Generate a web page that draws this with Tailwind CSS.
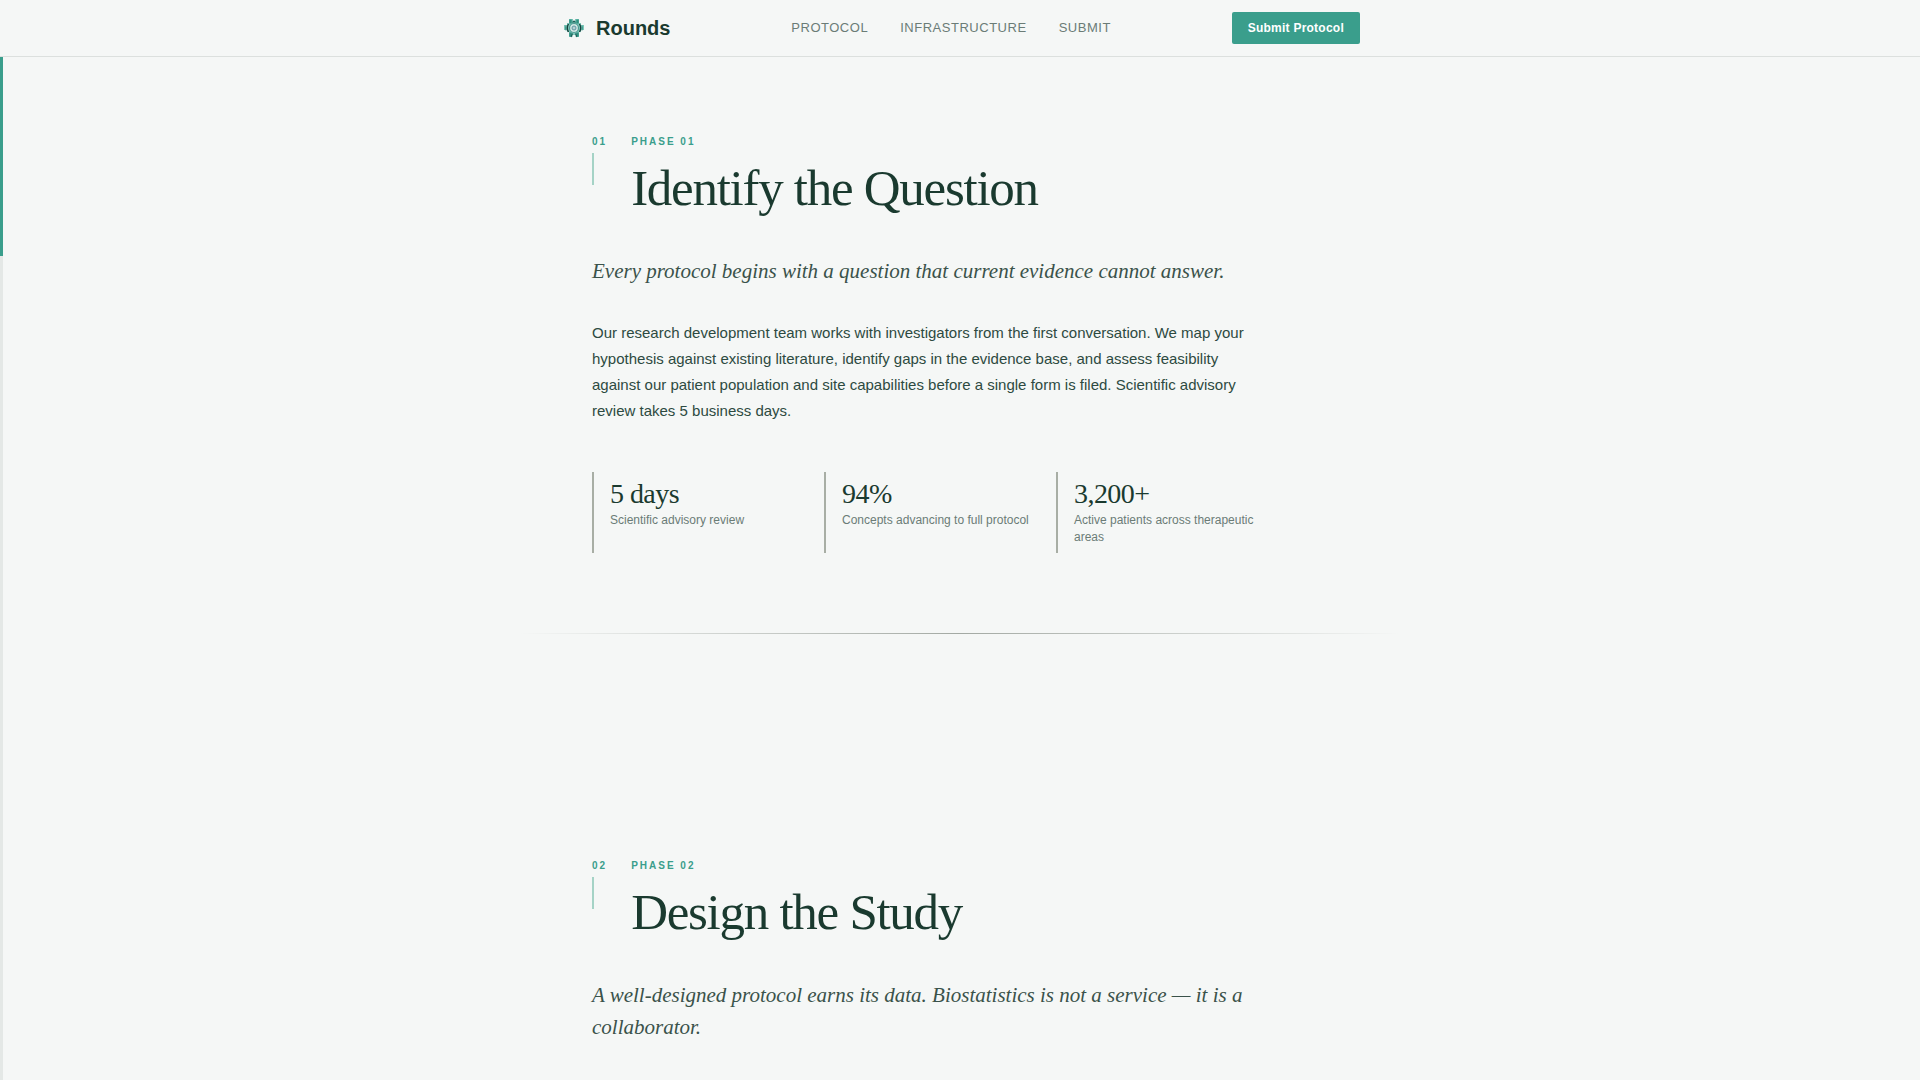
<!DOCTYPE html>
<html lang="en">
<head>
    <meta charset="UTF-8">
    <meta name="viewport" content="width=device-width, initial-scale=1.0">
    <title>Rounds</title>
    <script src="https://cdn.jsdelivr.net/npm/@tailwindcss/browser@4"></script>
</head>
<body class="bg-[#f5f7f6] text-[#1a3a2f] font-['Liberation_Sans',sans-serif] overflow-x-hidden">

    <!-- Reading progress -->
    <div class="fixed left-0 top-14 bottom-0 w-[3px] bg-[#e4e8e6]">
        <div class="w-full bg-[#3a9e8c]" style="height: 19.5%"></div>
    </div>

    <header class="sticky top-0 z-10 bg-[#f5f7f6] border-b border-[#dce0de]">
        <div class="max-w-[800px] h-14 mx-auto flex items-center justify-between">
            <a href="#" class="flex items-center gap-2 text-xl font-bold">
                <svg class="w-7 h-7" viewBox="0 0 28 28" fill="none" aria-hidden="true">
                    <path d="M9 5h4v2h2V5h4v4h2v2h3v5h-3v2h-2v5h-3.500v-2h-3v2H9v-5H7v-2H4v-5h3V9h2z" fill="#7cc7b9"/>
                    <path d="M10.500 5.500v4M17.500 5.500v4M10.500 18.500v4M17.500 18.500v4" stroke="#2f9080" stroke-width="2.500"/>
                    <path d="M12.500 8.500L14 7l1.500 1.500M12.500 19.500l-1.500 3.500M15.500 19.500l1.500 3.500" stroke="#1f5f58" stroke-width="1.200"/>
                    <path d="M8.500 10q-2.500 4 0 8M19.500 10q2.500 4 0 8" stroke="#183f3b" stroke-width="1.400"/>
                    <path d="M6 11.500q-1 2.500 0 5M22 11.500q1 2.500 0 5" stroke="#3f9c8c"/>
                    <circle cx="14" cy="14" r="4.500" fill="#cfe5e2" stroke="#4f9a93" stroke-width="1.200"/>
                    <circle cx="14" cy="14" r="2" fill="#b8d0d5" stroke="#6197a0"/>
                </svg>
                Rounds
            </a>
            <nav class="flex gap-8 text-[13px] tracking-[0.04em] text-[#6b7c76]">
                <a href="#protocol">PROTOCOL</a>
                <a href="#infrastructure">INFRASTRUCTURE</a>
                <a href="#submit">SUBMIT</a>
            </nav>
            <button type="button" class="h-8 px-4 rounded-xs bg-[#3a9e8c] text-white text-xs font-bold tracking-[0.02em]">Submit Protocol</button>
        </div>
    </header>

    <main id="protocol">
        <section class="max-w-[880px] mx-auto px-[72px] pt-[77px] pb-20">
            <div class="flex gap-6">
                <div class="text-[10px] leading-4 font-bold tracking-[0.2em] text-[#3a9e8c]">
                    01
                    <div class="w-0.5 h-8 mt-[3px] bg-[#a5d3c6]"></div>
                </div>
                <div>
                    <p class="text-[10px] leading-4 font-bold tracking-[0.2em] text-[#3a9e8c]">PHASE 01</p>
                    <h2 class="mt-3 font-['Liberation_Serif',serif] text-[51px] leading-[53px] tracking-tight">Identify the Question</h2>
                </div>
            </div>
            <p class="max-w-[660px] mt-10 font-['Liberation_Serif',serif] italic text-[21px] leading-8 text-[#3a524a]">Every protocol begins with a question that current evidence cannot answer.</p>
            <p class="max-w-[660px] mt-[33px] text-[15px] leading-[26px] text-[#2d4a41]">Our research development team works with investigators from the first conversation. We map your hypothesis against existing literature, identify gaps in the evidence base, and assess feasibility against our patient population and site capabilities before a single form is filed. Scientific advisory review takes 5 business days.</p>
            <dl class="max-w-[680px] mt-12 grid grid-cols-3 gap-4">
                <div class="flex flex-col-reverse justify-end border-l-2 border-[#a8aea5] pl-4 pt-2 pb-[7px]">
                    <dt class="text-xs leading-[17px] text-[#6b7c76]">Scientific advisory review</dt>
                    <dd class="mb-1 font-['Liberation_Serif',serif] text-[28px] leading-7 tracking-[-0.02em]">5 days</dd>
                </div>
                <div class="flex flex-col-reverse justify-end border-l-2 border-[#a8aea5] pl-4 pt-2 pb-[7px]">
                    <dt class="text-xs leading-[17px] text-[#6b7c76]">Concepts advancing to full protocol</dt>
                    <dd class="mb-1 font-['Liberation_Serif',serif] text-[28px] leading-7 tracking-[-0.02em]">94%</dd>
                </div>
                <div class="flex flex-col-reverse justify-end border-l-2 border-[#a8aea5] pl-4 pt-2 pb-[7px]">
                    <dt class="text-xs leading-[17px] text-[#6b7c76]">Active patients across therapeutic areas</dt>
                    <dd class="mb-1 font-['Liberation_Serif',serif] text-[28px] leading-7 tracking-[-0.02em]">3,200+</dd>
                </div>
            </dl>
        </section>

        <div class="max-w-[880px] h-px mx-auto bg-linear-to-r/srgb from-transparent via-[#a3a9a3] to-transparent"></div>

        <section class="max-w-[880px] mx-auto px-[72px] pt-56 pb-20">
            <div class="flex gap-6">
                <div class="text-[10px] leading-4 font-bold tracking-[0.2em] text-[#3a9e8c]">
                    02
                    <div class="w-0.5 h-8 mt-[3px] bg-[#a5d3c6]"></div>
                </div>
                <div>
                    <p class="text-[10px] leading-4 font-bold tracking-[0.2em] text-[#3a9e8c]">PHASE 02</p>
                    <h2 class="mt-3 font-['Liberation_Serif',serif] text-[51px] leading-[53px] tracking-tight">Design the Study</h2>
                </div>
            </div>
            <p class="max-w-[660px] mt-10 font-['Liberation_Serif',serif] italic text-[21px] leading-8 text-[#3a524a]">A well-designed protocol earns its data. Biostatistics is not a service — it is a collaborator.</p>
        </section>
    </main>

</body>
</html>
